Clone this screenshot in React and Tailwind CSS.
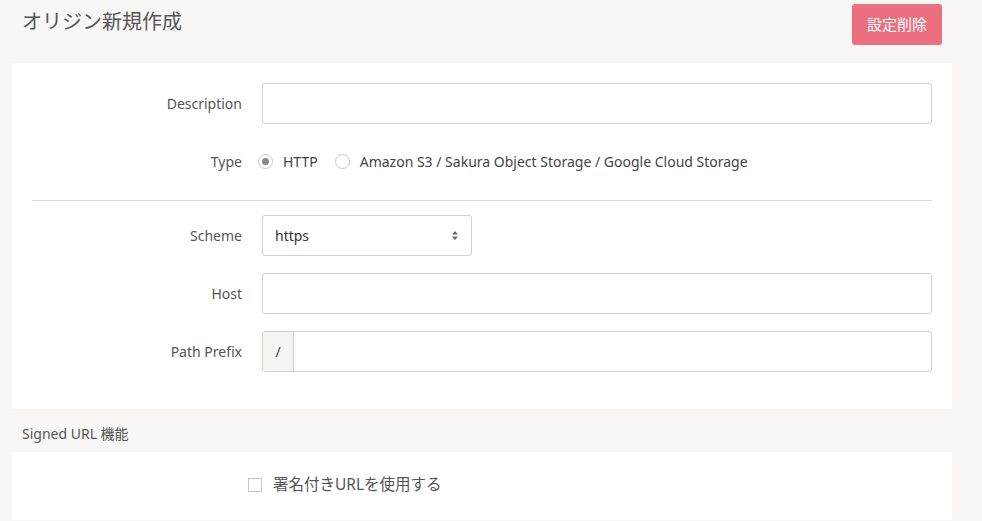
import React from "react";

const font = { fontFamily: '"Source Sans Pro", "Noto Sans", "Noto Sans CJK JP", sans-serif' };

function Row({ label, children }) {
  return (
    <div className="flex items-center">
      <div className="w-[230px] shrink-0 pr-5 text-right text-[14px] text-[#555]">{label}</div>
      <div className="flex-1">{children}</div>
    </div>
  );
}

function Radio({ checked, label }) {
  return (
    <label className="flex items-center gap-[10px]">
      <span className="flex h-[15px] w-[15px] items-center justify-center rounded-full border border-[#c8c8c8] bg-white">
        {checked && <span className="h-[7px] w-[7px] rounded-full bg-[#888]" />}
      </span>
      <span>{label}</span>
    </label>
  );
}

export default function App() {
  return (
    <div className="min-h-[521px] bg-[#f8f7f5] text-[#555]" style={font}>
      <div className="flex items-start justify-between pl-[22px] pr-[40px] pt-[4px]">
        <h1 className="pt-[3px] text-[20px] leading-[28px] text-[#555]" style={{ fontFamily: '"Noto Sans CJK JP", sans-serif' }}>
          オリジン新規作成
        </h1>
        <button className="h-[41px] w-[90px] rounded-[3px] bg-[#ec6f80] text-[15px] text-white" style={{ fontFamily: '"Noto Sans CJK JP", sans-serif' }}>
          設定削除
        </button>
      </div>
      <div className="mx-[12px] mr-[30px] mt-[18px] bg-white pb-[37px] pl-[20px] pr-[20px] pt-[20px]">
        <div className="flex flex-col gap-[17px]">
          <Row label="Description">
            <div className="h-[41px] rounded-[3px] border border-[#d0d0d0]" />
          </Row>
          <Row label="Type">
            <div className="-ml-[4px] flex h-[41px] items-center gap-[17px] text-[14px] text-[#444]">
              <Radio checked label="HTTP" />
              <Radio label="Amazon S3 / Sakura Object Storage / Google Cloud Storage" />
            </div>
          </Row>
        </div>
        <div className="mb-[14px] mt-[18px] border-t border-[#d8d8d8]" />
        <div className="flex flex-col gap-[17px]">
          <Row label="Scheme">
            <div className="flex h-[41px] w-[210px] items-center justify-between rounded-[3px] border border-[#d0d0d0] pl-[12px] pr-[12px] text-[14px] text-[#333]">
              <span>https</span>
              <svg width="8" height="11" viewBox="0 0 8 11">
                <path d="M4 1 L7 4.5 L1 4.5 Z" fill="#666" />
                <path d="M4 10 L7 6.5 L1 6.5 Z" fill="#666" />
              </svg>
            </div>
          </Row>
          <Row label="Host">
            <div className="h-[41px] rounded-[3px] border border-[#d0d0d0]" />
          </Row>
          <Row label="Path Prefix">
            <div className="flex h-[41px] overflow-hidden rounded-[3px] border border-[#d0d0d0]">
              <div
                className="flex w-[31px] items-center justify-center border-r border-[#d0d0d0] bg-[#f6f5f2] text-[14px] text-[#444]"
                style={{ backgroundImage: "radial-gradient(#d6d3cc 0.6px, transparent 0.7px)", backgroundSize: "4px 4px" }}
              >
                /
              </div>
              <div className="flex-1" />
            </div>
          </Row>
        </div>
      </div>
      <div className="pb-[8px] pl-[22px] pt-[14px] text-[14px] leading-[21px] text-[#555]">
        Signed URL 機能
      </div>
      <div className="ml-[12px] mr-[30px] h-[68px] bg-white pt-[21px]">
        <label className="ml-[236px] flex items-center gap-[11px] text-[15.5px] text-[#555]">
          <span className="h-[14px] w-[14px] border border-[#c8c8c8] bg-white" />
          <span style={{ fontFamily: '"Noto Sans", "Noto Sans CJK JP", sans-serif' }}>署名付きURLを使用する</span>
        </label>
      </div>
    </div>
  );
}
